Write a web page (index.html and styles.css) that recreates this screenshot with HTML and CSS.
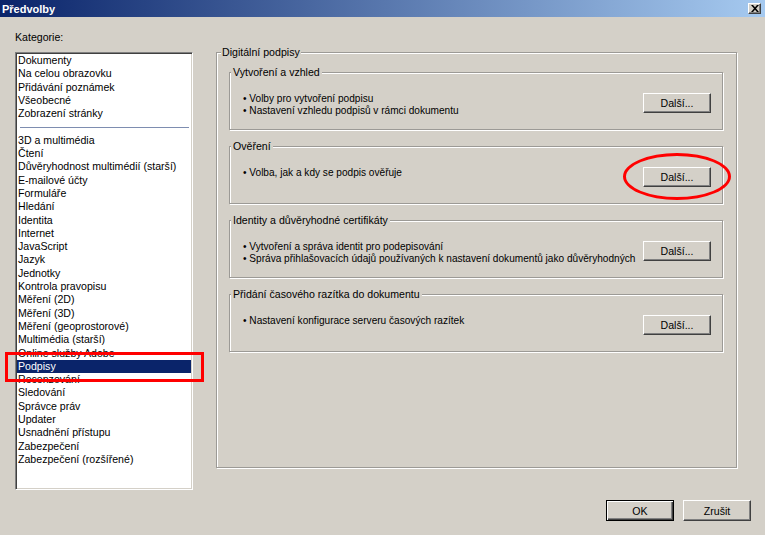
FILE: index.html
```html
<!DOCTYPE html>
<html lang="cs">
<head>
<meta charset="utf-8">
<title>Předvolby</title>
<link rel="stylesheet" href="styles.css">
</head>
<body>
<div class="window">
  <div class="titlebar">
    <span class="title">Předvolby</span>
    <span class="close">
      <svg width="8" height="7" viewBox="0 0 8 7"><path d="M0 0h2l2 2.2L6 0h2L5 3.5 8 7H6L4 4.8 2 7H0l3-3.5z" fill="#000"/></svg>
    </span>
  </div>
  <div class="main">
    <div class="left">
      <div class="cat-label">Kategorie:</div>
      <div class="listbox">
        <div class="item">Dokumenty</div>
        <div class="item">Na celou obrazovku</div>
        <div class="item">Přidávání poznámek</div>
        <div class="item">Všeobecné</div>
        <div class="item">Zobrazení stránky</div>
        <div class="sep"><span></span></div>
        <div class="item">3D a multimédia</div>
        <div class="item">Čtení</div>
        <div class="item">Důvěryhodnost multimédií (starší)</div>
        <div class="item">E-mailové účty</div>
        <div class="item">Formuláře</div>
        <div class="item">Hledání</div>
        <div class="item">Identita</div>
        <div class="item">Internet</div>
        <div class="item">JavaScript</div>
        <div class="item">Jazyk</div>
        <div class="item">Jednotky</div>
        <div class="item">Kontrola pravopisu</div>
        <div class="item">Měření (2D)</div>
        <div class="item">Měření (3D)</div>
        <div class="item">Měření (geoprostorové)</div>
        <div class="item">Multimédia (starší)</div>
        <div class="item">Online služby Adobe</div>
        <div class="item selected">Podpisy</div>
        <div class="item">Recenzování</div>
        <div class="item">Sledování</div>
        <div class="item">Správce práv</div>
        <div class="item">Updater</div>
        <div class="item">Usnadnění přístupu</div>
        <div class="item">Zabezpečení</div>
        <div class="item">Zabezpečení (rozšířené)</div>
      </div>
    </div>
    <div class="right">
      <div class="group outer">
        <div class="group-title">Digitální podpisy</div>
        <div class="inner-list">
          <div class="group inner">
            <div class="group-title">Vytvoření a vzhled</div>
            <div class="group-body">
              <div class="bullets">
                <div>• Volby pro vytvoření podpisu</div>
                <div>• Nastavení vzhledu podpisů v rámci dokumentu</div>
              </div>
              <button class="btn more">Další...</button>
            </div>
          </div>
          <div class="group inner">
            <div class="group-title">Ověření</div>
            <div class="group-body">
              <div class="bullets">
                <div>• Volba, jak a kdy se podpis ověřuje</div>
              </div>
              <button class="btn more">Další...</button>
            </div>
          </div>
          <div class="group inner">
            <div class="group-title">Identity a důvěryhodné certifikáty</div>
            <div class="group-body">
              <div class="bullets">
                <div>• Vytvoření a správa identit pro podepisování</div>
                <div>• Správa přihlašovacích údajů používaných k nastavení dokumentů jako důvěryhodných</div>
              </div>
              <button class="btn more">Další...</button>
            </div>
          </div>
          <div class="group inner">
            <div class="group-title">Přidání časového razítka do dokumentu</div>
            <div class="group-body">
              <div class="bullets">
                <div>• Nastavení konfigurace serveru časových razítek</div>
              </div>
              <button class="btn more">Další...</button>
            </div>
          </div>
        </div>
      </div>
    </div>
  </div>
  <div class="footer">
    <button class="btn default">OK</button>
    <button class="btn">Zrušit</button>
  </div>
  <div class="mark-rect"></div>
  <div class="mark-ellipse"></div>
</div>
</body>
</html>
```
FILE: styles.css
```css
* { box-sizing: border-box; }
html, body { margin: 0; padding: 0; }
body {
  background: #d4d0c8;
  font-family: "Liberation Sans", Arial, sans-serif;
  font-size: 10.6px;
  color: #000;
}
.window {
  position: relative;
  width: 765px;
  height: 535px;
  display: flex;
  flex-direction: column;
  background: #d4d0c8;
  overflow: hidden;
}
.titlebar {
  height: 17px;
  flex: none;
  display: flex;
  align-items: center;
  justify-content: space-between;
  padding: 0 4px 0 2px;
  background: linear-gradient(to right, #0a246a, #a6caf0);
}
.title {
  color: #fff;
  font-weight: bold;
  font-size: 11px;
}
.close {
  width: 13px;
  height: 11px;
  display: flex;
  align-items: center;
  justify-content: center;
  background: #d4d0c8;
  border: 1px solid;
  border-color: #fff #404040 #404040 #fff;
  box-shadow: inset -1px -1px 0 #808080;
}
.main {
  display: flex;
  align-items: flex-start;
  padding-left: 15px;
}
.left {
  width: 178px;
  padding-top: 14px;
}
.cat-label {
  line-height: 13px;
}
.listbox {
  margin-top: 8px;
  height: 438px;
  background: #fff;
  border: 1px solid;
  border-color: #808080 #fff #fff #808080;
  box-shadow: inset 1px 1px 0 #404040, inset -1px -1px 0 #d4d0c8;
  padding: 1px;
}
.item {
  height: 13.3px;
  line-height: 13.3px;
  padding-left: 1px;
  white-space: nowrap;
}
.item.selected {
  background: #0a246a;
  color: #fff;
}
.sep {
  height: 13.3px;
  display: flex;
  align-items: center;
  padding: 0 2px 0 3px;
}
.sep span {
  display: block;
  width: 100%;
  height: 1px;
  background: #7e8db0;
}
.right {
  margin-left: 23px;
  padding-top: 35px;
}
.group {
  display: flex;
  flex-direction: column;
  border: 1px solid #9c9a96;
  box-shadow: 1px 1px 0 #fff, inset 1px 1px 0 #fff;
}
.group-title {
  align-self: flex-start;
  margin-top: -7px;
  line-height: 13px;
  background: #d4d0c8;
  white-space: nowrap;
}
.outer {
  width: 521px;
  height: 416px;
}
.outer > .group-title {
  margin-left: 4px;
  padding: 0 1px;
}
.inner-list {
  margin: 13px 13px 0 12px;
  display: flex;
  flex-direction: column;
  gap: 16px;
}
.inner {
  height: 58px;
}
.inner > .group-title {
  margin-left: 1px;
  padding: 0 2px;
}
.group-body {
  display: flex;
  align-items: flex-start;
  padding: 14px 11px 0 13px;
}
.bullets {
  flex: 1;
  min-width: 0;
  font-size: 10.1px;
  line-height: 12px;
  white-space: nowrap;
}
.btn {
  font-family: inherit;
  font-size: 10.6px;
  color: #000;
  background: #d4d0c8;
  border: 1px solid;
  border-color: #fff #404040 #404040 #fff;
  box-shadow: inset -1px -1px 0 #808080;
  padding: 0;
  margin: 0;
}
.more {
  width: 68px;
  height: 20px;
  flex: none;
  margin-left: auto;
}
.footer {
  margin-top: auto;
  display: flex;
  justify-content: flex-end;
  gap: 9px;
  padding: 0 14px 14px 0;
}
.footer .btn {
  width: 68px;
  height: 21px;
}
.footer .btn.default {
  border: 1px solid #000;
  box-shadow: inset 1px 1px 0 #fff, inset -1px -1px 0 #404040, inset -2px -2px 0 #808080;
}
.mark-rect {
  position: absolute;
  left: 5px;
  top: 352px;
  width: 199px;
  height: 30px;
  border: 3px solid #f00;
}
.mark-ellipse {
  position: absolute;
  left: 623px;
  top: 153px;
  width: 108px;
  height: 47px;
  border: 3px solid #f00;
  border-radius: 50%;
}
```
